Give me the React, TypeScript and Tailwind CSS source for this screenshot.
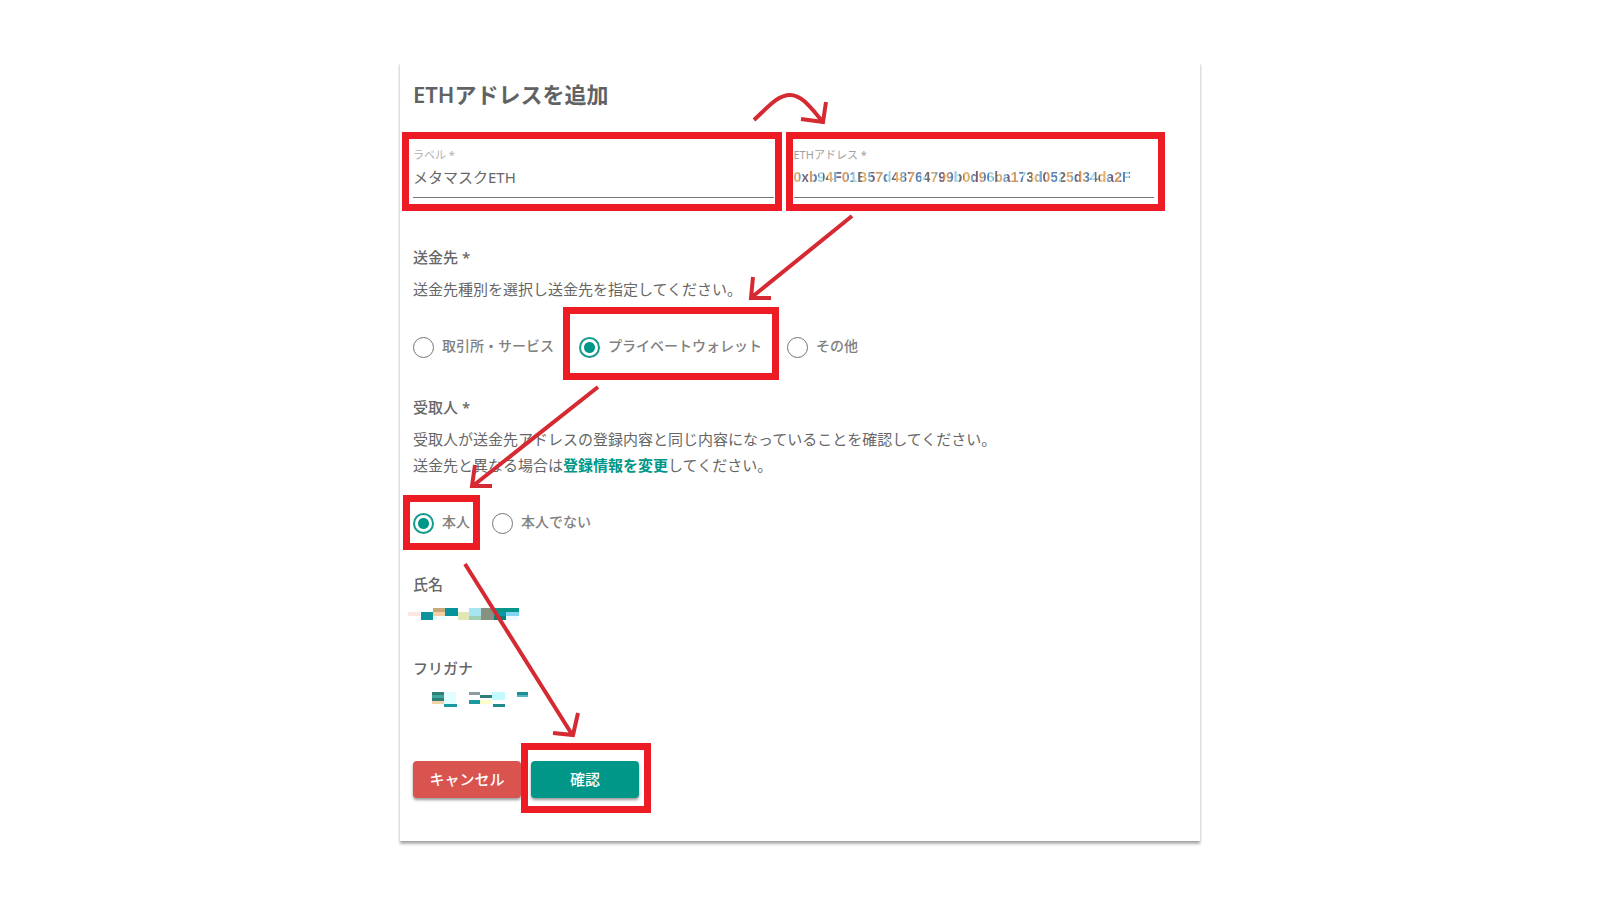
import { useState } from "react";
import type { ReactNode } from "react";

type Block = [x: number, y: number, width: number, height: number, fill: string];

const nameBlocks: Block[] = [
    [-5, 4, 12, 4, "#fde6e3"],
    [8, 4, 12, 8, "#0b949c"],
    [20, 0, 12, 4, "#c8a97c"],
    [20, 4, 12, 4, "#f5cfa0"],
    [20, 8, 12, 4, "#f0fdfd"],
    [32, 0, 13, 8, "#07929a"],
    [45, 4, 11, 8, "#e3e7b8"],
    [56, 0, 12, 8, "#a5e6f0"],
    [56, 8, 12, 4, "#a0cfb5"],
    [68, 0, 13, 12, "#86917f"],
    [81, 0, 25, 4, "#06968a"],
    [81, 4, 12, 4, "#0598a8"],
    [81, 8, 12, 4, "#067f74"],
    [93, 4, 13, 4, "#82d4f0"],
    [93, 8, 13, 4, "#effcff"],
];

const kanaBlocks: Block[] = [
    [19, 0, 12, 3, "#2e8077"],
    [19, 3, 12, 3, "#3fa79b"],
    [19, 6, 12, 3, "#2e8077"],
    [19, 9, 12, 3, "#f2d2a8"],
    [31, 0, 12, 12, "#e0fdff"],
    [31, 12, 13, 3, "#189aa0"],
    [56, 0, 11, 3, "#8b9ca3"],
    [56, 8, 11, 4, "#189aa0"],
    [67, 3, 12, 3, "#2e8077"],
    [67, 8, 12, 4, "#fdfccb"],
    [79, 0, 13, 8, "#c2fbff"],
    [80, 12, 12, 3, "#1f8a88"],
    [104, 0, 11, 3, "#1b8f92"],
    [104, 3, 11, 2, "#55b5c5"],
];

function Mosaic({ blocks, label }: { blocks: Block[]; label: string }) {
    return (
        <svg role="img" aria-label={label} className="block h-4 w-32 overflow-visible" shapeRendering="crispEdges">
            {blocks.map(([x, y, width, height, fill], i) => (
                <rect key={i} x={x} y={y} width={width} height={height} fill={fill} />
            ))}
        </svg>
    );
}

// red frame drawn over the element it sits in
function Marker({ className }: { className: string }) {
    return <span aria-hidden="true" className={`pointer-events-none absolute border-7 border-[#ed1c24] ${className}`} />;
}

function Option({ name, checked, onChange, children, marker }: { name: string; checked: boolean; onChange: () => void; children: ReactNode; marker?: string }) {
    return (
        <label className="relative flex h-6 items-center gap-2 text-sm leading-5 font-medium text-[#808080]">
            <input
                type="radio"
                name={name}
                checked={checked}
                onChange={onChange}
                className="size-[21px] appearance-none rounded-full border border-[#757575] bg-white checked:border-2 checked:border-[#159a8d] checked:bg-[radial-gradient(circle,#009688_5px,white_6px)]"
            />
            <span className="pb-0.5">{children}</span>
            {marker && <Marker className={marker} />}
        </label>
    );
}

function Arrows() {
    return (
        <svg aria-hidden="true" className="pointer-events-none absolute inset-0 size-full" fill="none" stroke="#d62a33" strokeWidth="4">
            <path d="M354 58C369 44 378 33 390 33C402 33 411 46 423 60M426 40L423 60L401 57" />
            <path d="M452 154L352 235M353 215L351 236H371" />
            <path d="M198 325L74 423M75 403L72 424H92" />
            <path d="M65 502L173 674M178 651L173 673L153 671" />
        </svg>
    );
}

export default function App() {
    const [destination, setDestination] = useState("wallet");
    const [recipient, setRecipient] = useState("self");

    return (
        <div className="min-h-screen bg-white px-4 pt-[62px] pb-14 font-['Noto_Sans','Noto_Sans_CJK_JP',sans-serif] text-[15px] text-[#666]">
            <main className="relative mx-auto max-w-[800px] bg-white pt-4 pb-[43px] pl-[13px] shadow-[0_3px_3px_rgba(0,0,0,0.25),0_2px_2px_rgba(0,0,0,0.15)]">
                <h1 className="text-[22px] leading-8 font-semibold text-[#606264]">ETHアドレスを追加</h1>
                <form onSubmit={(e) => e.preventDefault()}>
                    <div className="mt-[37px] flex gap-5 pr-[46px]">
                        <div className="relative flex-1">
                            <label htmlFor="label" className="block text-[11px] leading-4 text-[#b0b0b0]">ラベル *</label>
                            <input id="label" defaultValue="メタマスクETH" className="block h-[35px] w-full border-b border-[#777] pb-2 outline-none" />
                            <Marker className="-top-[15px] -right-2 -bottom-[13px] -left-[11px]" />
                        </div>
                        <div className="relative flex-1">
                            <label htmlFor="address" className="block text-[11px] leading-4 text-[#a0a0a0]">ETHアドレス *</label>
                            <div className="border-b border-[#777]">
                                <input
                                    id="address"
                                    defaultValue="0xb94F01B57d48764799b0d96ba173d0525d34da2F"
                                    className="block h-[34px] w-full bg-[repeating-linear-gradient(90deg,#e0b070_0_5px,#7aa8c8_5px_9px,#77607c_9px_14px,#d29a62_14px_20px,#5b83b5_20px_25px,#9ed3df_25px_29px,#716c70_29px_34px)] bg-clip-text pb-1.5 font-['Liberation_Sans',sans-serif] text-sm font-bold text-transparent outline-none"
                                />
                            </div>
                            <Marker className="-top-[15px] -right-[11px] -bottom-[13px] -left-2" />
                        </div>
                    </div>

                    <h2 className="mt-[46px] leading-[26px] font-medium">送金先 *</h2>
                    <p className="mt-1.5 leading-[26px]">送金先種別を選択し送金先を指定してください。</p>
                    <div role="radiogroup" aria-label="送金先" className="mt-[33px] flex gap-[25px]">
                        <Option name="destination" checked={destination === "exchange"} onChange={() => setDestination("exchange")}>取引所・サービス</Option>
                        <Option name="destination" checked={destination === "wallet"} onChange={() => setDestination("wallet")} marker="-top-7 -right-[17px] -bottom-[21px] -left-4">プライベートウォレット</Option>
                        <Option name="destination" checked={destination === "other"} onChange={() => setDestination("other")}>その他</Option>
                    </div>

                    <h2 className="mt-[35px] leading-[26px] font-medium">受取人 *</h2>
                    <p className="mt-1.5 leading-[26px]">
                        受取人が送金先アドレスの登録内容と同じ内容になっていることを確認してください。
                        <br />
                        送金先と異なる場合は<a href="#" className="font-bold text-[#009688]">登録情報を変更</a>してください。
                    </p>
                    <div role="radiogroup" aria-label="受取人" className="mt-[33px] flex gap-[22px]">
                        <Option name="recipient" checked={recipient === "self"} onChange={() => setRecipient("self")} marker="-inset-x-[10px] -top-4 -bottom-[15px]">本人</Option>
                        <Option name="recipient" checked={recipient === "other"} onChange={() => setRecipient("other")}>本人でない</Option>
                    </div>

                    <h2 className="mt-9 mb-[11px] leading-[26px] font-medium">氏名</h2>
                    <Mosaic blocks={nameBlocks} label="氏名" />
                    <h2 className="mt-[31px] mb-[11px] leading-[26px] font-medium">フリガナ</h2>
                    <Mosaic blocks={kanaBlocks} label="フリガナ" />

                    <div className="mt-[53px] flex gap-[10px] font-medium text-white">
                        <button type="button" className="h-[37px] w-[108px] rounded bg-[#d9534f] shadow-[0_2px_3px_rgba(0,0,0,0.4)]">キャンセル</button>
                        <div className="relative">
                            <button type="submit" className="h-[37px] w-[108px] rounded bg-[#009688] shadow-[0_2px_3px_rgba(0,0,0,0.4)]">確認</button>
                            <Marker className="-top-[18px] -right-3 -bottom-[15px] -left-[10px]" />
                        </div>
                    </div>
                </form>
                <Arrows />
            </main>
        </div>
    );
}
